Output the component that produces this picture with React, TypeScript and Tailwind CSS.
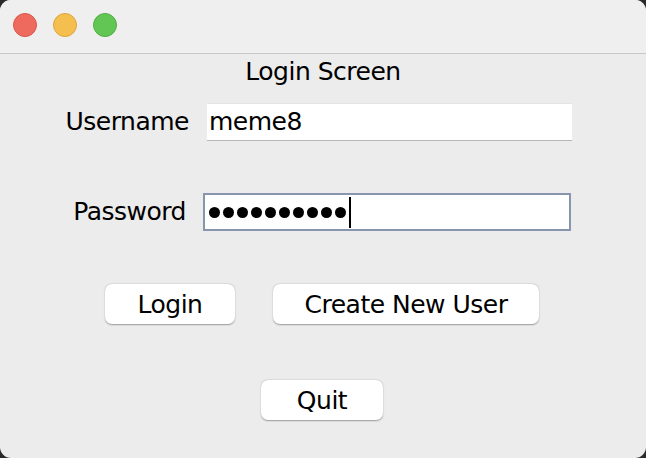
import React from 'react';

const font = { fontFamily: '"DejaVu Sans", "Liberation Sans", sans-serif' };

const Btn = ({ label, className }: { label: string; className: string }) => (
  <button
    type="button"
    className={`h-[40px] rounded-[7px] bg-white text-[25px] tracking-[-0.5px] text-black leading-none shadow-[0_0.5px_1.5px_rgba(0,0,0,0.35)] ${className}`}
  >
    {label}
  </button>
);

export default function App() {
  return (
    <div className="w-[646px] h-[458px] bg-[#2a2a2a]" style={font}>
      <div className="w-full h-full rounded-[11px] overflow-hidden bg-[#ececec] flex flex-col text-[25px] tracking-[-0.5px] text-black">
        {/* title bar */}
        <div className="h-[54px] shrink-0 bg-[#efefef] border-b border-[#c8c8c8] flex items-center gap-[16px] pl-[13px] pb-[3px]">
          <span className="w-[24px] h-[24px] rounded-full bg-[#ee6a5f] border border-[#d9574c]" />
          <span className="w-[24px] h-[24px] rounded-full bg-[#f5bf4f] border border-[#dea53b]" />
          <span className="w-[24px] h-[24px] rounded-full bg-[#62c655] border border-[#50ad44]" />
        </div>

        <div className="h-[36px] flex items-center justify-center">Login Screen</div>

        {/* username */}
        <div className="mt-[13px] h-[38px] flex items-center">
          <div className="w-[189px] text-right">Username</div>
          <div className="ml-[18px] w-[365px] h-full bg-white border-b border-[#b5b5b5] border-t border-t-[#e4e4e4] flex items-center pl-[2px]">
            meme8
          </div>
        </div>

        {/* password */}
        <div className="mt-[52px] h-[38px] flex items-center">
          <div className="w-[186px] text-right">Password</div>
          <div className="ml-[17px] w-[368px] h-full bg-white border-2 border-[#8795ad] flex items-center pl-[4px]">
            <div className="flex gap-[3px]">
              {Array.from({ length: 10 }).map((_, i) => (
                <span key={i} className="w-[11px] h-[11px] rounded-full bg-black" />
              ))}
            </div>
            <span className="ml-[3px] w-[2px] h-[31px] bg-black" />
          </div>
        </div>

        {/* buttons */}
        <div className="mt-[53px] flex pl-[105px] gap-[38px]">
          <Btn label="Login" className="w-[130px]" />
          <Btn label="Create New User" className="w-[266px]" />
        </div>

        <div className="mt-[56px] flex pl-[261px]">
          <Btn label="Quit" className="w-[122px]" />
        </div>
      </div>
    </div>
  );
}
